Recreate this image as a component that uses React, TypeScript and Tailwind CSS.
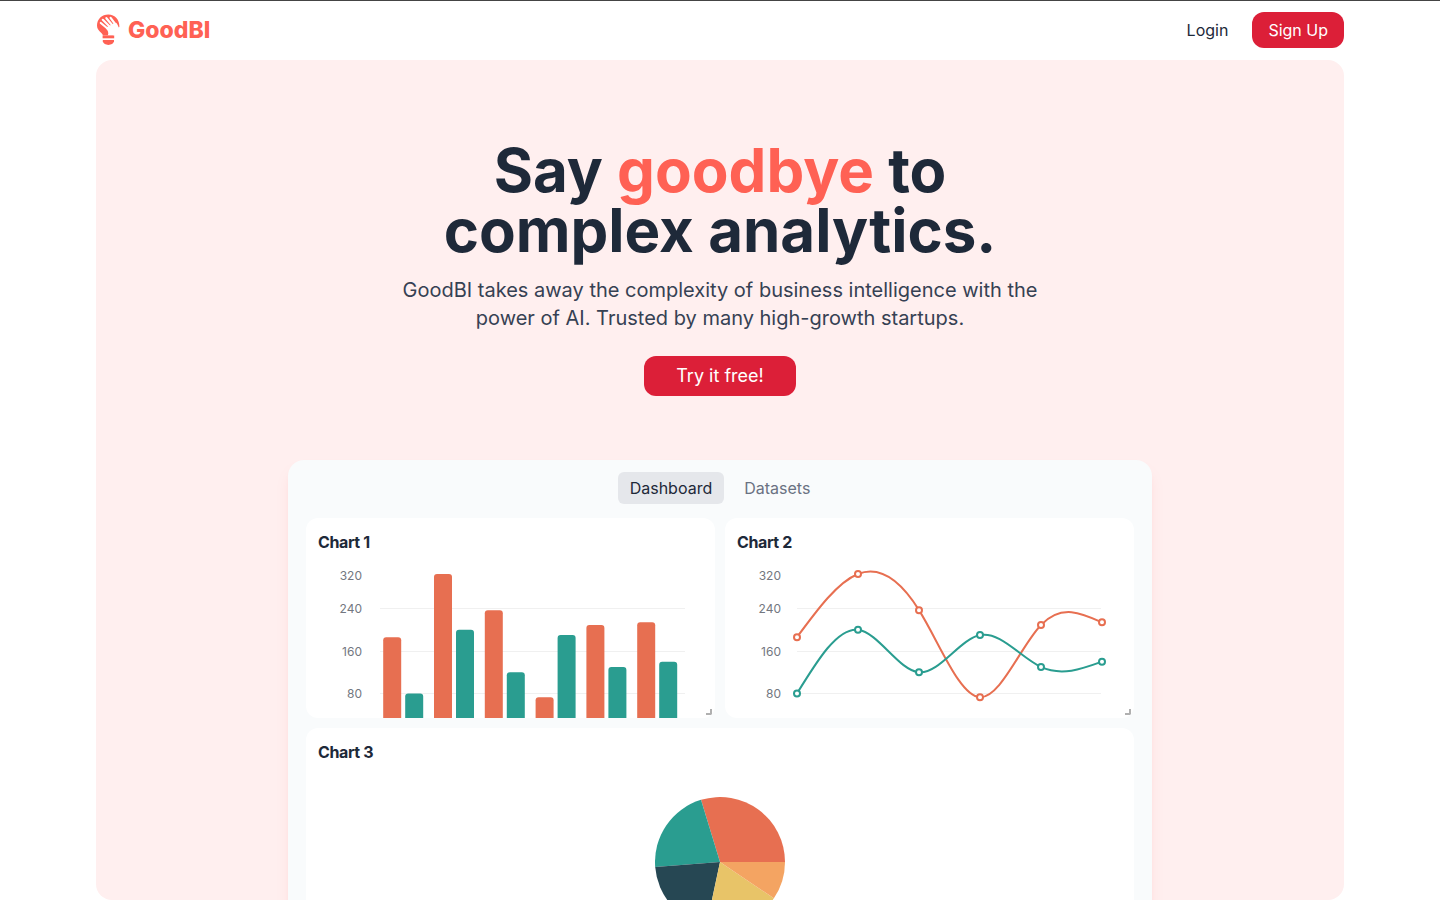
const bars = [
  [186, 80],
  [305, 200],
  [237, 120],
  [73, 190],
  [209, 130],
  [214, 140],
];

const yAt = (value: number) => 139.5 - (value - 80) * 0.531;

const ticks = [
  { label: 320, y: 21 },
  { label: 240, y: 54 },
  { label: 160, y: 97 },
  { label: 80, y: 139 },
];

function smoothPath(values: number[]) {
  const pts = values.map((v, i) => [72 + i * 61, yAt(v)]);
  const n = pts.length - 1;
  const controls = (axis: number) => {
    const a = [0];
    const b = [2];
    const r = [pts[0][axis] + 2 * pts[1][axis]];
    for (let i = 1; i < n - 1; i++) {
      a[i] = 1;
      b[i] = 4;
      r[i] = 4 * pts[i][axis] + 2 * pts[i + 1][axis];
    }
    a[n - 1] = 2;
    b[n - 1] = 7;
    r[n - 1] = 8 * pts[n - 1][axis] + pts[n][axis];
    for (let i = 1; i < n; i++) {
      const m = a[i] / b[i - 1];
      b[i] -= m;
      r[i] -= m * r[i - 1];
    }
    const first: number[] = [];
    first[n - 1] = r[n - 1] / b[n - 1];
    for (let i = n - 2; i >= 0; i--) first[i] = (r[i] - first[i + 1]) / b[i];
    const second: number[] = [];
    for (let i = 0; i < n - 1; i++) second[i] = 2 * pts[i + 1][axis] - first[i + 1];
    second[n - 1] = (pts[n][axis] + first[n - 1]) / 2;
    return [first, second];
  };
  const [x1, x2] = controls(0);
  const [y1, y2] = controls(1);
  let d = `M${pts[0][0]},${pts[0][1]}`;
  for (let i = 0; i < n; i++) {
    d += `C${x1[i]},${y1[i]} ${x2[i]},${y2[i]} ${pts[i + 1][0]},${pts[i + 1][1]}`;
  }
  return d;
}

function Axis({ from, to }: { from: number; to: number }) {
  return (
    <g>
      {ticks.map((t) => (
        <g key={t.label}>
          {t.label < 320 && (
            <line x1={from} x2={to} y1={t.y + 0.5} y2={t.y + 0.5} stroke="#f0f0f0" />
          )}
          <text x="56" y={t.y + 5} textAnchor="end" fontSize="12" fill="#737780">
            {t.label}
          </text>
        </g>
      ))}
    </g>
  );
}

function BarChart() {
  return (
    <svg viewBox="0 0 409 164" className="block w-full" role="img" aria-label="Bar chart">
      <Axis from={74} to={379} />
      {bars.map(([a, b], i) => (
        <g key={i}>
          <rect x={77.2 + i * 50.8} y={yAt(a)} width="18" height="240" rx="3" fill="#e76f51" />
          <rect x={99.2 + i * 50.8} y={yAt(b)} width="18" height="240" rx="3" fill="#2a9d90" />
        </g>
      ))}
    </svg>
  );
}

function LineChart() {
  const series = [
    { color: "#e76f51", values: bars.map((p) => p[0]) },
    { color: "#2a9d90", values: bars.map((p) => p[1]) },
  ];
  return (
    <svg viewBox="0 0 409 164" className="block w-full" role="img" aria-label="Line chart">
      <Axis from={72} to={376} />
      {series.map((s) => (
        <g key={s.color} fill="none" stroke={s.color} strokeWidth="2">
          <path d={smoothPath(s.values)} />
          {s.values.map((v, i) => (
            <circle key={i} cx={72 + i * 61} cy={yAt(v)} r="3" fill="#fff" />
          ))}
        </g>
      ))}
    </svg>
  );
}

const slices = [
  { from: 0, to: 107, color: "#e76f51" },
  { from: 107, to: 184.5, color: "#2a9d90" },
  { from: 184.5, to: 258, color: "#264753" },
  { from: 258, to: 326, color: "#e8c468" },
  { from: 326, to: 360, color: "#f4a462" },
];

function PieChart() {
  const point = (deg: number) => {
    const a = (deg * Math.PI) / 180;
    return `${65 + 65 * Math.cos(a)},${65 - 65 * Math.sin(a)}`;
  };
  return (
    <svg width="130" height="130" viewBox="0 0 130 130" className="mx-auto mt-[33px] block" role="img" aria-label="Pie chart">
      {slices.map((s) => (
        <path key={s.color} d={`M65,65L${point(s.from)}A65,65 0 0 0 ${point(s.to)}Z`} fill={s.color} />
      ))}
    </svg>
  );
}

function ResizeHandle() {
  return (
    <svg width="6" height="6" viewBox="0 0 6 6" className="absolute right-[3px] bottom-[3px]" aria-hidden="true">
      <path d="M5 0V5H0" fill="none" stroke="#b0b0b0" strokeWidth="2" />
    </svg>
  );
}

function Logo() {
  return (
    <svg width="24" height="32" viewBox="0 0 24 32" aria-hidden="true">
      <path
        d="M7 21.500C6.500 18.500 1 17 1 11.500C1 5 6 .5 12.300 .5C19 .5 23.600 5.500 23.400 13L17 20V21.500Z"
        fill="#ff6154"
      />
      <g stroke="#fff" strokeWidth="2.200" strokeLinecap="round" fill="none">
        <path d="M4.800 9L11.500 14.500" />
        <path d="M6.800 5.800L14 13" />
        <path d="M10.400 4.200L16.500 11.500" />
        <path d="M14.600 3.800L19.500 10.500" />
      </g>
      <path
        d="M10.500 13.300L14 11.500L17.500 9.500L20 8.800C21.500 10 22 12 22.800 13.500H24V18L18 21.500H11.800C13 19 12 16.500 9.800 14.500Z"
        fill="#fff"
      />
      <path d="M6.600 21.500H18.200V24.300H6.600Z" fill="#ff6154" />
      <path d="M6.800 26H18V27.600C17 30 15.500 30.900 12.400 30.900S7.800 30 6.800 27.600Z" fill="#ff6154" />
    </svg>
  );
}

export default function App() {
  return (
    <div className="flex h-screen flex-col overflow-hidden border-t border-[#444444] bg-white font-[Inter,sans-serif] text-gray-800">
      <div className="mx-auto flex min-h-0 w-full max-w-[1248px] flex-1 flex-col">
        <header className="flex h-[59px] shrink-0 items-center justify-between pb-0.5">
          <a href="#" className="flex items-center gap-2">
            <Logo />
            <span className="text-[23px] leading-8 font-extrabold text-[#ff6154]">GoodBI</span>
          </a>
          <nav className="flex items-center gap-6">
            <a href="#">Login</a>
            <a href="#" className="rounded-xl bg-[#dc1f38] px-4 py-1.5 text-white">
              Sign Up
            </a>
          </nav>
        </header>

        <main className="flex min-h-0 flex-1 flex-col items-center overflow-hidden rounded-2xl bg-[#ffefef] pt-20">
          <h1 className="text-center text-6xl leading-[60px] font-bold">
            Say <span className="text-[#ff6154]">goodbye</span> to
            <br />
            complex analytics.
          </h1>
          <p className="mt-4 max-w-2xl text-center text-xl leading-7 text-gray-700">
            GoodBI takes away the complexity of business intelligence with the power of AI. Trusted by many high-growth
            startups.
          </p>
          <button type="button" className="mt-6 h-10 shrink-0 rounded-xl bg-[#dc1f38] px-8 text-lg text-white">
            Try it free!
          </button>

          <section className="mt-16 w-full max-w-[864px] shrink-0 rounded-t-2xl bg-[#f9fbfc] px-[18px] pt-3 pb-8 shadow-lg shadow-red-200/60">
            <div className="flex justify-center gap-2">
              <button type="button" className="h-8 rounded-md bg-gray-200 px-3">
                Dashboard
              </button>
              <button type="button" className="h-8 rounded-md px-3 text-gray-500">
                Datasets
              </button>
            </div>
            <div className="mt-3.5 grid grid-cols-2 gap-2.5">
              <article className="relative h-[200px] overflow-hidden rounded-xl bg-white pt-3">
                <h2 className="px-3 leading-6 font-bold tracking-tight">Chart 1</h2>
                <BarChart />
                <ResizeHandle />
              </article>
              <article className="relative h-[200px] overflow-hidden rounded-xl bg-white pt-3">
                <h2 className="px-3 leading-6 font-bold tracking-tight">Chart 2</h2>
                <LineChart />
                <ResizeHandle />
              </article>
              <article className="col-span-2 h-80 rounded-xl bg-white pt-3">
                <h2 className="px-3 leading-6 font-bold tracking-tight">Chart 3</h2>
                <PieChart />
              </article>
            </div>
          </section>
        </main>
      </div>
    </div>
  );
}
